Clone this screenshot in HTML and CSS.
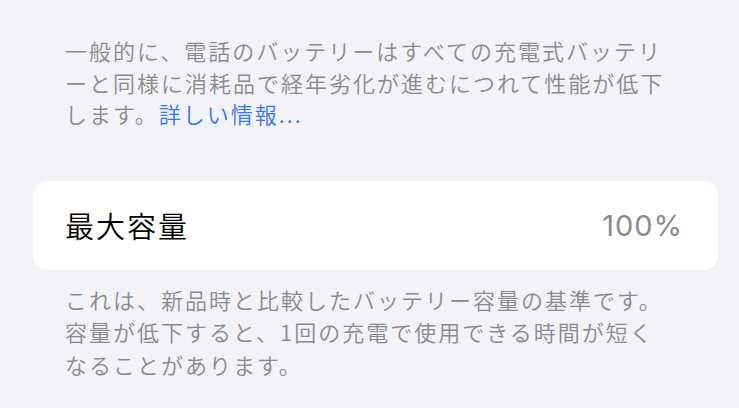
FILE: index.html
```html
<!DOCTYPE html>
<html lang="ja">
<head>
<meta charset="utf-8">
<link rel="stylesheet" href="styles.css">
</head>
<body>
<main class="page">
  <p class="note note-top">一般的に、電話のバッテリーはすべての充電式バッテリ<br>ーと同様に消耗品で経年劣化が進むにつれて性能が低下<br>します。<a class="link" href="#">詳しい情報...</a></p>
  <section class="card">
    <div class="row">
      <span class="row-label">最大容量</span>
      <span class="row-value">100%</span>
    </div>
  </section>
  <p class="note note-bottom">これは、新品時と比較したバッテリー容量の基準です。<br>容量が低下すると、1回の充電で使用できる時間が短く<br>なることがあります。</p>
</main>
</body>
</html>
```

FILE: styles.css
```css
html, body {
  margin: 0;
  padding: 0;
  background: #f2f2f7;
}

.page {
  width: 739px;
  height: 408px;
  overflow: hidden;
  display: flex;
  flex-direction: column;
  font-family: "Noto Sans CJK JP", "Noto Sans", sans-serif;
}

.note {
  margin: 0;
  padding: 0 0 0 65px;
  font-size: 22px;
  font-weight: 350;
  letter-spacing: 2px;
  line-height: 31.5px;
  color: #8a8a8e;
}

.note-top {
  padding-top: 35px;
}

.link {
  color: #3478f6;
  text-decoration: none;
}

.card {
  margin: 51px 21px 0 33px;
  height: 89px;
  background: #ffffff;
  border-radius: 14px;
  display: flex;
  align-items: center;
}

.row {
  flex: 1;
  display: flex;
  align-items: center;
  justify-content: space-between;
  padding: 0 36px 0 32px;
}

.row-label {
  font-size: 29px;
  font-weight: 350;
  letter-spacing: 2px;
  color: #000000;
}

.row-value {
  font-family: "Inter", "Noto Sans", sans-serif;
  font-size: 29px;
  font-weight: 400;
  color: #8a8a8e;
  letter-spacing: 1px;
  margin-right: -1px;
}

.note-bottom {
  padding-top: 13px;
  line-height: 32.5px;
}
```
